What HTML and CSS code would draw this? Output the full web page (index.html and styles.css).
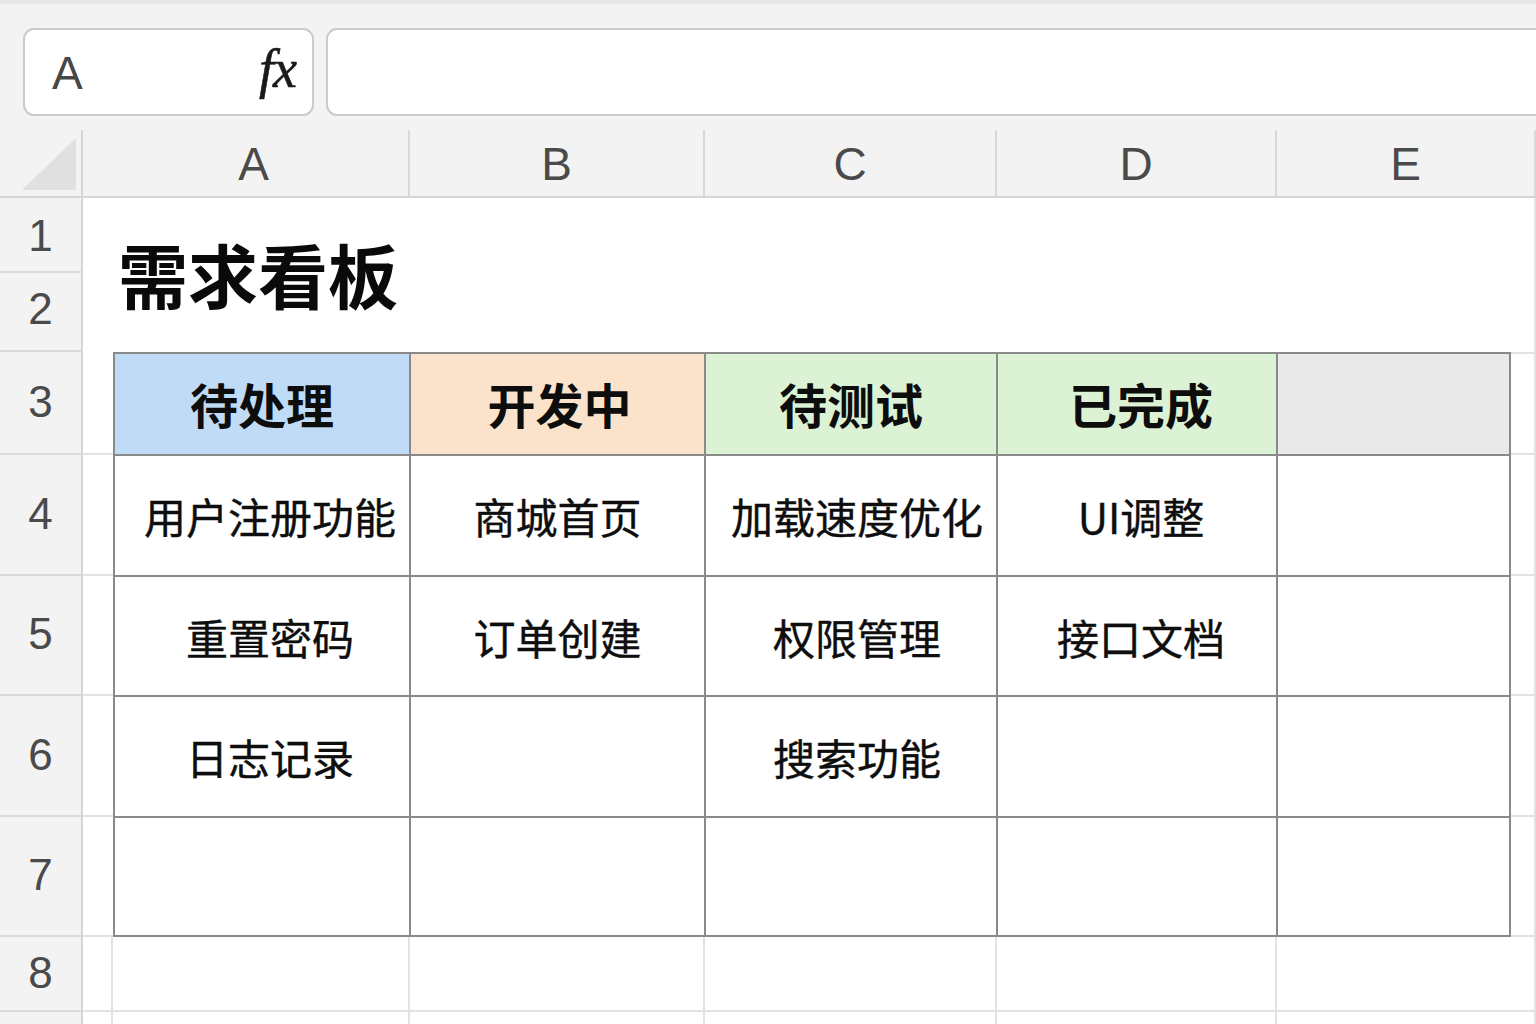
FILE: index.html
```html
<!DOCTYPE html>
<html lang="zh-CN">
<head>
<meta charset="utf-8">
<title>需求看板</title>
<link rel="stylesheet" href="styles.css">
</head>
<body>
<div class="app">
  <div class="topbar">
    <div class="namebox">
      <span class="name">A</span>
      <span class="fx">fx</span>
    </div>
    <div class="formula"></div>
  </div>

  <div class="colheads">
    <div class="corner"><span class="tri"></span></div>
    <div class="ch ch-a">A</div>
    <div class="ch ch-b">B</div>
    <div class="ch ch-c">C</div>
    <div class="ch ch-d">D</div>
    <div class="ch ch-e">E</div>
  </div>

  <div class="sheet">
    <div class="rh r1">1</div>
    <div class="rh r2">2</div>
    <div class="rh r3">3</div>
    <div class="rh r4">4</div>
    <div class="rh r5">5</div>
    <div class="rh r6">6</div>
    <div class="rh r7">7</div>
    <div class="rh r8">8</div>
    <div class="rh r9"></div>

    <div class="title">需求看板</div>

    <div class="gap g3"></div>
    <div class="gap g4"></div>
    <div class="gap g5"></div>
    <div class="gap g6"></div>
    <div class="gap g7"></div>
    <div class="gap g8 gv"></div>
    <div class="gap g9 gv"></div>

    <div class="edge e3"></div>
    <div class="edge e4"></div>
    <div class="edge e5"></div>
    <div class="edge e6"></div>
    <div class="edge e7"></div>
    <div class="edge e8"></div>
    <div class="edge e9"></div>

    <div class="board">
      <div class="hd hd-todo">待处理</div>
      <div class="hd hd-dev">开发中</div>
      <div class="hd hd-test">待测试</div>
      <div class="hd hd-done">已完成</div>
      <div class="hd hd-none"></div>

      <div class="cell ca">用户注册功能</div>
      <div class="cell">商城首页</div>
      <div class="cell cc">加载速度优化</div>
      <div class="cell cd">UI调整</div>
      <div class="cell"></div>

      <div class="cell ca">重置密码</div>
      <div class="cell">订单创建</div>
      <div class="cell cc">权限管理</div>
      <div class="cell cd">接口文档</div>
      <div class="cell"></div>

      <div class="cell ca">日志记录</div>
      <div class="cell"></div>
      <div class="cell cc">搜索功能</div>
      <div class="cell"></div>
      <div class="cell"></div>

      <div class="cell"></div>
      <div class="cell"></div>
      <div class="cell"></div>
      <div class="cell"></div>
      <div class="cell"></div>
    </div>

    <div class="lc l8a"></div>
    <div class="lc l8b"></div>
    <div class="lc l8c"></div>
    <div class="lc l8d"></div>
    <div class="lc l8e"></div>
    <div class="lc lb l9a"></div>
    <div class="lc lb l9b"></div>
    <div class="lc lb l9c"></div>
    <div class="lc lb l9d"></div>
    <div class="lc lb l9e"></div>
  </div>
</div>
</body>
</html>
```

FILE: styles.css
```css
* { box-sizing: border-box; }
html, body {
  margin: 0;
  padding: 0;
  width: 1536px;
  height: 1024px;
  overflow: hidden;
  background: #ffffff;
}
.app {
  width: 1536px;
  height: 1024px;
  overflow: hidden;
  font-family: "Liberation Sans", "Noto Sans CJK SC", sans-serif;
}

/* ---------- top formula bar ---------- */
.topbar {
  height: 130px;
  background: #f3f3f3;
  border-top: 4px solid #e8e8e8;
  padding: 24px 0 0 23px;
  display: flex;
  gap: 12px;
}
.namebox {
  width: 291px;
  height: 88px;
  background: #ffffff;
  border: 2px solid #cbcbcb;
  border-radius: 11px;
  display: flex;
  align-items: center;
  justify-content: space-between;
  padding: 0 16px 0 27px;
}
.name {
  font-family: "Liberation Sans", sans-serif;
  font-size: 46px;
  color: #474747;
  line-height: 1;
  margin-top: 2px;
}
.fx {
  font-family: "Liberation Serif", serif;
  font-style: italic;
  font-size: 54px;
  color: #1a1a1a;
  line-height: 1;
  margin-top: -6px;
  letter-spacing: -1px;
  -webkit-text-stroke: 0.6px #1a1a1a;
}
.formula {
  flex: 1;
  height: 88px;
  margin-right: -40px;
  background: #ffffff;
  border: 2px solid #cbcbcb;
  border-radius: 11px;
}

/* ---------- column headers ---------- */
.colheads {
  display: flex;
  height: 68px;
  background: #f3f3f3;
  border-bottom: 2px solid #d6d6d6;
}
.corner {
  width: 83px;
  border-right: 2px solid #d6d6d6;
  display: flex;
  align-items: flex-end;
  justify-content: flex-end;
  padding: 0 5px 6px 0;
}
.tri {
  width: 54px;
  height: 52px;
  background: #e0e0e0;
  clip-path: polygon(100% 0, 100% 100%, 0 100%);
}
.ch {
  display: flex;
  align-items: center;
  justify-content: center;
  font-size: 46px;
  color: #4a4a4a;
  border-right: 2px solid #d9d9d9;
  padding-top: 2px;
}
.ch-a { width: 327px; padding-left: 16px; }
.ch-b { width: 295px; }
.ch-c { width: 292px; }
.ch-d { width: 280px; }
.ch-e { width: 259px; }

/* ---------- sheet grid ---------- */
.sheet {
  display: grid;
  grid-template-columns: 83px 30px 297px 295px 292px 280px 234px 25px;
  grid-template-rows: 75px 79px 103px 121px 120px 121px 120px 75px 12px;
  height: 826px;
}
.rh {
  grid-column: 1;
  background: #f3f3f3;
  border-right: 2px solid #d6d6d6;
  border-bottom: 2px solid #dadada;
  display: flex;
  align-items: center;
  justify-content: center;
  font-size: 44px;
  color: #4a4a4a;
  padding-bottom: 2px;
}
.r1 { grid-row: 1; padding-top: 4px; }
.r2 { grid-row: 2; padding-bottom: 6px; }
.r3 { grid-row: 3; }
.r4 { grid-row: 4; }
.r5 { grid-row: 5; }
.r6 { grid-row: 6; }
.r7 { grid-row: 7; }
.r8 { grid-row: 8; }
.r9 { grid-row: 9; border-bottom: none; }

.title {
  grid-column: 2 / -1;
  grid-row: 1 / 3;
  display: flex;
  align-items: center;
  padding: 0 0 4px 35px;
  font-family: "Noto Sans CJK SC", sans-serif;
  font-weight: 700;
  font-size: 70px;
  color: #0a0a0a;
  border-right: 2px solid #e2e2e2;
}

.gap {
  grid-column: 2;
  border-bottom: 2px solid #e2e2e2;
}
.gv { border-right: 2px solid #e2e2e2; }
.g3 { grid-row: 3; }
.g4 { grid-row: 4; }
.g5 { grid-row: 5; }
.g6 { grid-row: 6; }
.g7 { grid-row: 7; }
.g8 { grid-row: 8; }
.g9 { grid-row: 9; border-bottom: none; }

.edge {
  grid-column: 8;
  border-right: 2px solid #e2e2e2;
  border-bottom: 2px solid #e2e2e2;
}
.e3 { grid-row: 3; border-top: 2px solid #e2e2e2; }
.e4 { grid-row: 4; }
.e5 { grid-row: 5; }
.e6 { grid-row: 6; }
.e7 { grid-row: 7; }
.e8 { grid-row: 8; }
.e9 { grid-row: 9; border-bottom: none; }

/* ---------- board table ---------- */
.board {
  grid-column: 3 / 8;
  grid-row: 3 / 8;
  display: grid;
  grid-template-columns: 294px 293px 290px 278px 1fr;
  grid-template-rows: 100px 119px 118px 119px 1fr;
  gap: 2px;
  padding: 2px;
  background: #8a8a8a;
  font-family: "Noto Sans CJK SC", sans-serif;
}
.hd {
  display: flex;
  align-items: center;
  justify-content: center;
  font-size: 48px;
  font-weight: 700;
  color: #0d0d0d;
  padding-bottom: 2px;
}
.hd-todo { background: #c0dbf5; }
.hd-dev  { background: #fbe3cb; padding-left: 4px; }
.hd-test { background: #dbf2d4; }
.hd-done { background: #dbf2d4; padding-left: 8px; }
.hd-none { background: #e9e9e9; }

.cell {
  background: #ffffff;
  display: flex;
  align-items: center;
  justify-content: center;
  font-size: 42px;
  font-weight: 400;
  color: #0e0e0e;
  -webkit-text-stroke: 0.4px #0e0e0e;
}
.ca { padding-left: 16px; }
.cc { padding-left: 12px; }
.cd { padding-left: 8px; }

/* ---------- empty rows below ---------- */
.lc {
  border-right: 2px solid #e2e2e2;
  border-bottom: 2px solid #e2e2e2;
}
.lb { border-bottom: none; }
.l8a { grid-row: 8; grid-column: 3; }
.l8b { grid-row: 8; grid-column: 4; }
.l8c { grid-row: 8; grid-column: 5; }
.l8d { grid-row: 8; grid-column: 6; }
.l8e { grid-row: 8; grid-column: 7; border-right: none; }
.l9a { grid-row: 9; grid-column: 3; }
.l9b { grid-row: 9; grid-column: 4; }
.l9c { grid-row: 9; grid-column: 5; }
.l9d { grid-row: 9; grid-column: 6; }
.l9e { grid-row: 9; grid-column: 7; border-right: none; }
```
